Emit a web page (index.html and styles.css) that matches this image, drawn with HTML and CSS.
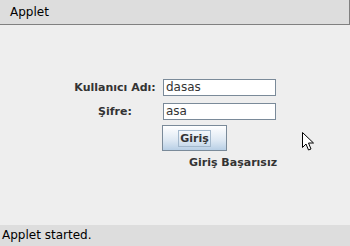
FILE: index.html
```html
<!DOCTYPE html>
<html lang="tr">
<head>
    <meta charset="UTF-8">
    <title>Applet</title>
    <link rel="stylesheet" href="styles.css">
</head>
<body>

    <!-- Applet viewer title -->
    <header class="title-bar">Applet</header>

    <!-- Login form -->
    <main class="applet">
        <div class="login-form">
            <label class="field-label" for="user">Kullanıcı Adı:</label>
            <div class="text-field" id="user">dasas</div>

            <label class="field-label" for="pass">Şifre:</label>
            <div class="text-field" id="pass">asa</div>

            <div class="button-cell">
                <button class="login-button"><span class="focus-ring">Giriş</span></button>
            </div>

            <p class="result">Giriş Başarısız</p>
        </div>

        <svg class="cursor" width="13" height="20" viewBox="0 0 13 20">
            <path d="M0.5 0.5 L0.5 15.5 L4 12 L6.5 18 L9 17 L6.5 11 L11.5 11 Z" fill="#fff" stroke="#000" stroke-width="1"/>
        </svg>
    </main>

    <!-- Status -->
    <footer class="status-bar">Applet started.</footer>

</body>
</html>
```

FILE: styles.css
```css
body {
    margin: 0;
    padding: 0;
    width: 350px;
    height: 246px;
    display: flex;
    flex-direction: column;
    background: #eeeeee;
    font-family: "DejaVu Sans", sans-serif;
    overflow: hidden;
}

.title-bar {
    height: 24px;
    line-height: 24px;
    padding-left: 10px;
    background: #dddddd;
    border-bottom: 1px solid #808080;
    border-right: 1px solid #808080;
    font-size: 12px;
    color: #000;
}

.applet {
    flex: 1;
    position: relative;
}

.login-form {
    display: grid;
    grid-template-columns: 84px 113px;
    column-gap: 6px;
    row-gap: 7px;
    align-items: center;
    margin: 54px 0 0 73px;
}

.field-label {
    font-size: 11px;
    font-weight: bold;
    color: #333333;
    text-align: center;
    white-space: nowrap;
}

.text-field {
    height: 15px;
    border: 1px solid #7a8a99;
    background: #fff;
    font-size: 12px;
    line-height: 15px;
    padding-left: 2px;
    color: #333333;
}

.button-cell {
    grid-column: 2;
    margin-top: -2px;
}

.login-button {
    display: block;
    width: 65px;
    height: 26px;
    margin-left: -1px;
    padding: 0;
    border: 1px solid #7a8a99;
    background: linear-gradient(#ffffff, #dde8f3 60%, #b8cfe5);
    font-family: "DejaVu Sans", sans-serif;
    font-size: 11px;
    font-weight: bold;
    color: #333333;
}

.focus-ring {
    border: 1px solid #a3b8cc;
    padding: 1px 1px;
}

.result {
    grid-column: 2;
    margin: -2px 0 0 26px;
    font-size: 11px;
    font-weight: bold;
    color: #333333;
    white-space: nowrap;
}

.cursor {
    position: absolute;
    left: 302px;
    top: 107px;
}

.status-bar {
    height: 21px;
    line-height: 21px;
    padding-left: 2px;
    background: #dddddd;
    font-size: 12px;
    color: #000;
}
```
